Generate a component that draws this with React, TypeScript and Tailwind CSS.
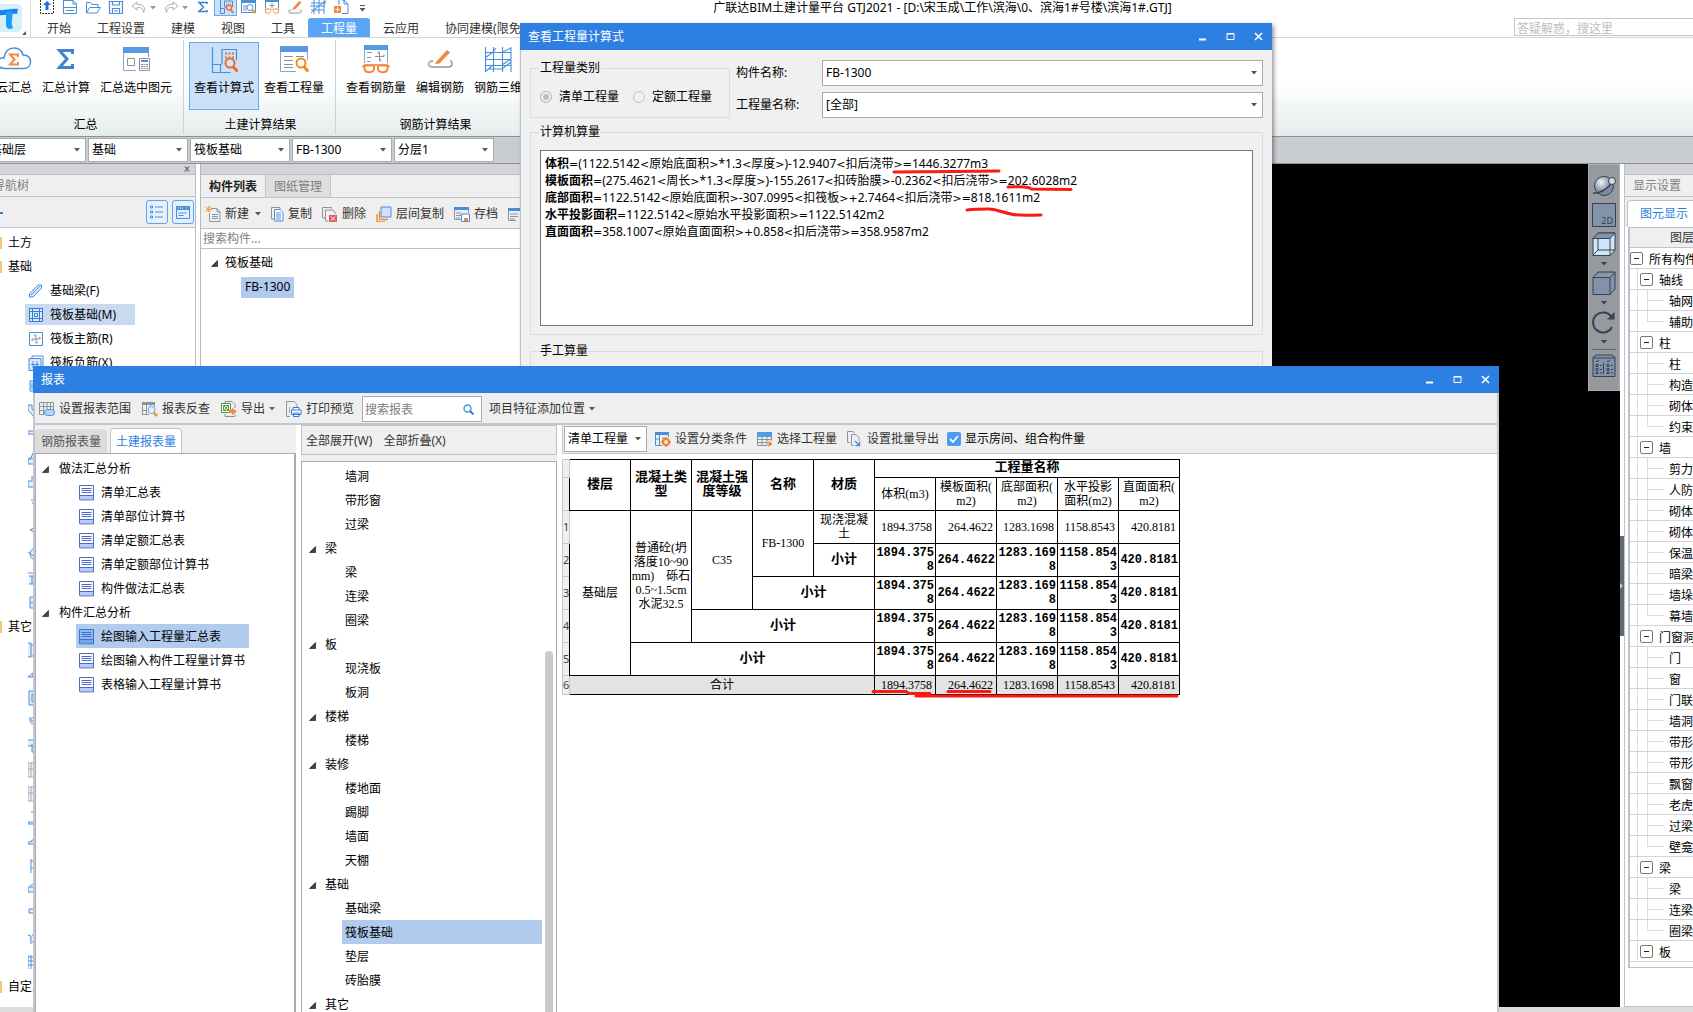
import type { ReactNode } from "react";

/* ---------- small shared pieces ---------- */

function Svg({ w = 16, h = 16, box, children }: { w?: number; h?: number; box?: string; children: ReactNode }) {
  return (
    <svg width={w} height={h} viewBox={box ?? `0 0 ${w} ${h}`} fill="none" className="shrink-0" aria-hidden="true">
      {children}
    </svg>
  );
}

function Caret({ className = "text-[#555]" }: { className?: string }) {
  return (
    <svg width="6" height="4" viewBox="0 0 6 4" className={`shrink-0 ${className}`} aria-hidden="true">
      <path d="M0 0h6L3 3.5z" fill="currentColor" />
    </svg>
  );
}

function TreeArrow() {
  return (
    <svg width="7" height="7" viewBox="0 0 7 7" className="shrink-0" aria-hidden="true">
      <path d="M6.5 0.5v6h-6z" fill="#444" stroke="#111" strokeWidth="0.6" />
    </svg>
  );
}

function Combo({ label, value, className, id }: { label: string; value: string; className: string; id?: string }) {
  return (
    <div className={`relative ${className}`}>
      <select
        id={id}
        aria-label={label}
        className="block h-full w-full appearance-none border border-[#a9abae] bg-white px-[3px] text-xs text-black outline-none"
      >
        <option>{value}</option>
      </select>
      <span className="pointer-events-none absolute inset-y-0 right-[6px] flex items-center">
        <Caret />
      </span>
    </div>
  );
}

function WindowButtons() {
  return (
    <div className="flex">
      <button aria-label="最小化" className="flex h-[27px] w-7 items-center justify-center">
        <Svg w={9} h={9}><path d="M1 7.5h7" stroke="#fff" strokeWidth="2" /></Svg>
      </button>
      <button aria-label="最大化" className="flex h-[27px] w-7 items-center justify-center">
        <Svg w={9} h={9}><path d="M1 1.5h7v6H1zM1 2h7" stroke="#fff" /></Svg>
      </button>
      <button aria-label="关闭" className="flex h-[27px] w-7 items-center justify-center">
        <Svg w={9} h={9}><path d="M1 1l7 7M8 1l-7 7" stroke="#fff" strokeWidth="1.6" /></Svg>
      </button>
    </div>
  );
}

const B = "#4a8edb";
const O = "#f08a3c";
const G = "#8b949c";

/* ---------- quick access bar ---------- */

const quick: { name: string; icon: ReactNode; caret?: boolean; active?: boolean }[] = [
  { name: "上传", icon: <Svg><path d="M1.5 0v13.500h13V0" stroke="#333" strokeDasharray="2 1" /><path d="M8 1l4 4H9.500v5h-3V5H4z" fill="#1f6fd8" /></Svg> },
  { name: "新建", icon: <Svg><path d="M1.500 0v13.500h13V4L11 .5H2M1.500 7.500h13M4 10.500h8M11 0v4h4" stroke={B} /></Svg> },
  { name: "打开", icon: <Svg><path d="M1.500 13V2.500h4l1.500 2h6v3M1.500 13l3-5.500h11L12 13z" stroke={B} /></Svg> },
  { name: "保存", icon: <Svg><path d="M1.500 1.500h13v12h-13zM4.500 1.500V5h7V1.500M4.500 13.500v-5h7v5M6 11h4" stroke={B} strokeWidth="1.200" /></Svg> },
  { name: "撤销", caret: true, icon: <Svg><path d="M6 2L1 6l5 4V7.500c4-.500 6 1 6.500 5C15.500 7 11 4 6 4.500z" stroke="#a8acb0" /></Svg> },
  { name: "重做", caret: true, icon: <Svg><path d="M10 2l5 4-5 4V7.500c-4-.500-6 1-6.500 5C.500 7 5 4 10 4.500z" stroke="#a8acb0" /></Svg> },
  { name: "汇总", icon: <Svg><path d="M12 4V2.500H4L8.500 7 4 11.500h8V10" stroke="#3b7fd0" strokeWidth="1.500" /></Svg> },
  { name: "查看计算式", active: true, icon: <Svg><path d="M2.500 0v13.500M2.500 8.500h4v5H2.500M6.500 1h8v6M6.500 1v6h3" stroke={B} /><path d="M8 3h1m1 0h1m1 0h1M8 5h1" stroke={O} /><circle cx="11" cy="7.500" r="2.500" stroke="#e8702a" strokeWidth="1.300" /><path d="M12.500 9.500l3 3.500" stroke="#e8702a" strokeWidth="1.800" /></Svg> },
  { name: "查看工程量", icon: <Svg><path d="M.500 1.500h14v11H.500z" stroke={B} /><path d="M0 0h15v3H0z" fill={B} /><path d="M2 6h4M2 8h4M2 10h4" stroke={G} /><circle cx="9" cy="7.500" r="3" fill="#fff" stroke={B} /><path d="M11.500 10l3 3" stroke="#f39a1e" strokeWidth="2.400" /></Svg> },
  { name: "查看钢筋量", icon: <Svg><path d="M1.500 8V1h13v7" stroke={B} /><path d="M1 0h14v2H1z" fill={B} /><path d="M8 3v5M5.500 5.500h5" stroke={G} /><path d="M1 9h5l2 1 2-1h5M1.500 9v3c1 2 4 2 5-1M14.500 9v3c-1 2-4 2-5-1" stroke={O} /></Svg> },
  { name: "编辑钢筋", icon: <Svg><path d="M6 8l6-7 2.500 1.500L8.500 9 5 10z" fill={O} /><path d="M4 10c-4 0-3 3 0 3h8c3 0 3-3 1-3" stroke={G} /></Svg> },
  { name: "钢筋三维", icon: <Svg><path d="M1 3h15M1 10h13M4 0v14M9 0v14M14 0v14M1 13l4-4 11-8M0 6h15" stroke={B} /></Svg> },
  { name: "导出", icon: <Svg><path d="M6 0v5M9 0h2l4 4v9.500H9M11 0v4h4" stroke={B} /><path d="M1 6h7v7H1z" fill={O} /><path d="M2.500 9.500h4M4.500 7.500v4" stroke="#fff" /></Svg> },
];

const menus = ["开始", "工程设置", "建模", "视图", "工具", "工程量", "云应用", "协同建模(限免"];

/* ---------- ribbon icons ---------- */

const icCloud = (
  <Svg w={36} h={28}>
    <path d="M9 23.500C3 23.500 1 20 2 16.500c1-3 4-4 6-3.500C9 6 13 3 18 3c5 0 8 3 9 7 5 0 7.500 3 7.500 7s-3 6.500-7 6.500z" stroke={B} strokeWidth="1.500" />
    <path d="M22 12v-2.500h-8l4.500 5-4.500 5h8V17" stroke={O} strokeWidth="2" />
  </Svg>
);
const icSigma = (
  <Svg w={28} h={28}><path d="M20.500 9V5.500H7.500L15 14l-7.500 8.500h13V19" stroke="#3f83d2" strokeWidth="3" /></Svg>
);
const icCalc = (
  <Svg w={28} h={28}>
    <path d="M1 2h26v6H1z" fill="#5598e4" />
    <path d="M1.500 8v17.500H14M26.500 8v4M5.500 13.500h7v7h-7z" stroke={G} />
    <path d="M1.500 8v17.500H14" stroke="#7fa8d8" />
    <path d="M17.500 13.500h10v12h-10z" fill="#fff" stroke={G} />
    <path d="M19 15h7v2h-7z" fill={B} />
    <path d="M19 19.500h7M19 21.500h7M19 23.500h7" stroke={G} strokeDasharray="2 .5" />
  </Svg>
);
const icFormula = (
  <Svg w={28} h={28}>
    <path d="M2.500 2v25.500h18M2.500 19.500h8v8M12 19.500V4.500h14.500V15" stroke={B} strokeWidth="1.200" />
    <path d="M15 8.500h9M15 12.500h9" stroke="#e8702a" strokeWidth="2" strokeDasharray="2 1.500" />
    <circle cx="20" cy="18" r="4.500" fill="#cfe3fa" stroke="#e8702a" strokeWidth="2" />
    <path d="M23 21.500l4.500 5" stroke="#e8702a" strokeWidth="3" />
  </Svg>
);
const icQty = (
  <Svg w={30} h={28}>
    <path d="M1 1h28v6H1z" fill="#5598e4" />
    <path d="M1.500 7v19.500H17M28.500 7v8" stroke="#7fa8d8" />
    <path d="M5 11.500h9M5 15.500h9M5 19.500h9M5 22.500h9M17 11.500h8" stroke={G} />
    <circle cx="22" cy="18" r="4.500" stroke="#f08c1c" strokeWidth="2" />
    <path d="M25 21.500l4 5" stroke="#f08c1c" strokeWidth="3" />
  </Svg>
);
const icGlasses = (
  <Svg w={30} h={30}>
    <path d="M3 1h24v5H3z" fill="#5598e4" />
    <path d="M3.500 6v13M26.500 6v13" stroke="#7fa8d8" />
    <path d="M6 8.500h5M6 13.500h4M6 17.500h3M18.500 8v9M14 12.500h9M18.500 8c-2-1-2 2 0 2M23 12.500c1-2-1-2-1 0M18.500 17c2 1 2-2 0-2" stroke={G} />
    <path d="M1 23l3-2h22l3 2" stroke={O} strokeWidth="1.500" />
    <path d="M3.500 21.500H13v3c0 5-9.500 5-9.500 0zM17 21.500h9.500v3c0 5-9.500 5-9.500 0z" stroke={O} strokeWidth="2" />
  </Svg>
);
const icPen = (
  <Svg w={28} h={28}>
    <path d="M10 17L21 5l3 2.500L13.500 18.500 9 19z" fill={O} />
    <path d="M7 16c-6 0-6 6 0 6h15c5 0 5-5 2-6.500" stroke={G} strokeWidth="1.300" />
  </Svg>
);
const icGrid = (
  <Svg w={28} h={28}>
    <path d="M1.500 2v25M9.500 2v25M18.500 2v25M27 2v25M1 7.500h26M1 14.500h26M1 20.500h26M1 27L9 20M1 13l8-6 3-4M18 20l9-6M19 7l8-4M4 24h14l9-7" stroke={B} strokeWidth="1.100" />
  </Svg>
);

function RibbonButton({ icon, text, active }: { icon: ReactNode; text: string; active?: boolean }) {
  return (
    <button
      className={`flex h-[68px] shrink-0 flex-col items-center border px-1 pt-px ${
        active ? "border-[#6aa9ea] bg-[#cbe1f9]" : "border-transparent"
      }`}
    >
      <span className="flex h-[30px] items-center">{icon}</span>
      <span className="mt-[6px] text-xs whitespace-nowrap">{text}</span>
    </button>
  );
}

function RibbonGroup({ title, className, children }: { title: string; className: string; children: ReactNode }) {
  return (
    <section className={`flex shrink-0 flex-col pt-1 ${className}`}>
      <div className="flex">{children}</div>
      <div className="mt-[7px] pr-[3px] text-center text-xs">{title}</div>
    </section>
  );
}

function Header() {
  return (
    <header className="shrink-0">
      <div className="flex h-[38px] border-b border-[#d4d6d8] bg-white">
        <div className="flex w-[31px] shrink-0 items-end border-r border-[#d9d9d9]">
          <Svg w={28} h={33}>
            <rect x="-8" y="0" width="30" height="28" rx="5" fill="#d8eefb" />
            <path d="M-4 5C2 8 10 4 18 5l-1 5c-5-1-10 2-21 1z" fill="#1a7fe8" />
            <path d="M6 8l6-1c2 5-2 10 1 17-3 2-7 1-7-3z" fill="#16a0f5" />
            <path d="M26 27v4h-4z" fill="#555" />
          </Svg>
        </div>
        <div className="flex min-w-0 flex-1 flex-col">
          <div className="flex h-[19px] pl-1">
            <div className="flex h-4 shrink-0 items-start">
              {quick.map((q) => (
                <div key={q.name} className="flex h-4 items-center">
                  <button
                    aria-label={q.name}
                    className={`flex h-4 w-[23px] items-start justify-center ${q.active ? "border border-t-0 border-[#6aa9ea] bg-[#cbe1f9]" : ""}`}
                  >
                    {q.icon}
                  </button>
                  {q.caret && <Caret className="mr-[3px] text-[#999]" />}
                </div>
              ))}
              <button aria-label="更多" className="flex h-4 w-5 items-center justify-center">
                <Svg w={7} h={7}><path d="M1 .5h5" stroke="#555" /><path d="M.500 3h6l-3 3.500z" fill="#555" /></Svg>
              </button>
            </div>
            <h1 className="flex-1 pr-[180px] text-center text-xs leading-4 whitespace-nowrap">
              广联达BIM土建计量平台 GTJ2021 - [D:\宋玉成\工作\滨海\0、滨海1#号楼\滨海1#.GTJ]
            </h1>
          </div>
          <div className="flex h-[19px] justify-between pl-[3px]">
            <nav className="flex">
              {menus.map((m) => (
                <button
                  key={m}
                  className={`px-[13px] pt-[2px] text-xs leading-[17px] whitespace-nowrap ${
                    m === "工程量" ? "rounded-t-[3px] bg-[#5aa5f5] text-white" : "text-[#333]"
                  }`}
                >
                  {m}
                </button>
              ))}
            </nav>
            <input
              aria-label="搜索"
              placeholder="答疑解惑，搜这里"
              className="h-[18px] w-[179px] border border-r-0 border-[#c6c6c6] bg-white px-[2px] pt-[2px] text-xs placeholder:text-[#bdbdbd]"
            />
          </div>
        </div>
      </div>

      {/* Ribbon */}
      <div className="flex h-[98px] overflow-hidden bg-linear-to-b from-white from-45% to-[#e6ecec]">
        <RibbonGroup title="汇总" className="-ml-[9px] w-[192px]">
          <RibbonButton icon={icCloud} text="云汇总" />
          <RibbonButton icon={icSigma} text="汇总计算" />
          <RibbonButton icon={icCalc} text="汇总选中图元" />
        </RibbonGroup>
        <div className="my-[2px] w-px bg-[#cfd2d4]" />
        <RibbonGroup title="土建计算结果" className="w-[151px] pl-[5px]">
          <RibbonButton icon={icFormula} text="查看计算式" active />
          <RibbonButton icon={icQty} text="查看工程量" />
        </RibbonGroup>
        <div className="my-[2px] w-px bg-[#cfd2d4]" />
        <RibbonGroup title="钢筋计算结果" className="w-[197px] pl-[5px]">
          <RibbonButton icon={icGlasses} text="查看钢筋量" />
          <RibbonButton icon={icPen} text="编辑钢筋" />
          <RibbonButton icon={icGrid} text="钢筋三维" />
        </RibbonGroup>
      </div>

      {/* Floor / component filters */}
      <div className="flex h-7 items-center gap-[2px] border-y border-[#8f9295] bg-[#c9ccd1]">
        <Combo label="楼层" value="基础层" className="-ml-[14px] h-6 w-[100px] shrink-0" />
        <Combo label="分类" value="基础" className="h-6 w-[100px] shrink-0" />
        <Combo label="构件类型" value="筏板基础" className="h-6 w-[100px] shrink-0" />
        <Combo label="构件" value="FB-1300" className="h-6 w-[100px] shrink-0" />
        <Combo label="分层" value="分层1" className="h-6 w-[100px] shrink-0" />
      </div>
    </header>
  );
}

/* ---------- navigation tree ---------- */

const navIcons: Record<string, ReactNode> = {
  beam: <Svg><path d="M1.500 10.500L10 2h3.500v3L5 14H1.500z" fill="#d9e8f9" stroke={B} /><path d="M3 12l8.500-8.500" stroke={B} /></Svg>,
  raft: <Svg><path d="M1.500 1.500h13v13h-13z" fill="#dbe8fa" stroke="#2f7cd4" /><path d="M4.500 1.500v13M11.500 1.500v13M1.500 4.500h13M1.500 11.500h13" stroke="#2f7cd4" /><path d="M6.500 6.500h3v3h-3z" fill="#fff" stroke="#2f7cd4" /></Svg>,
  main: <Svg><path d="M1.500 1.500h13v13h-13z" stroke={B} /><path d="M8 4v8M4 8h8M8 4c-1.500-1-2 1-1 1.500M12 8c1-1.500-.500-2-1.500-1M8 12c1.500 1 2-1 1-1.500M4 8c-1 1.500.500 2 1.500 1" stroke={G} /></Svg>,
  neg: <Svg><path d="M4 3V1h11v11h-2" stroke={B} /><path d="M1 3.500h12v12H1z" fill="#dbe9fa" stroke={B} /><path d="M5 6v7M9 6v7M3 9.500h8" stroke={B} /></Svg>,
};

// Items lower down sit mostly behind the report window, so only icons are listed
const foundationRest = [
  "M2 3h12v10H2zM4 5v6",
  "M0 3h4v4l3 5-2 2-5-6z",
  "M0 5h14v3H0z",
  "M2 10l3-7M1 8h13v6H0v-3z",
  "M4 2v5H0v6h14",
  "M3 2h6M4 5h6v6",
  "M2 8l4-2v4z",
  "M8 2a6 6 0 100 12M0 6l8 6",
  "M0 3h14M1 6h13v8H1M4 6v8",
  "M2 3h12v11H2zM2 9h12",
];
const otherRest: [string, string][] = [
  ["M0 1h3v14H0M3 3h11v11H3", B],
  ["M0 11l5-4v4z", B],
  ["M1 1h13v14H1zM4 4h8v8H4z", B],
  ["M1 4h6M2 5c0 5 2 6 6 4M2 5l5 4", B],
  ["M0 2h10v6H0M4 6v8h8", B],
  ["M0 1h14v14H0zM3 1v14M0 7h6", "#a9adb1"],
  ["M0 1h14v14H0zM3 1v14M0 7h6", "#a9adb1"],
  ["M4 1v2M0 12h14v2H0z", B],
  ["M0 8h3l1-2h6v4H0z", B],
  ["M3 1v14M3 3h8M3 10h8", B],
  ["M2 4l3-2M0 5h14v5H0z", B],
  ["M1 3h10v4H1z", B],
  ["M0 5l3 1v8M4 5h6v7H4", B],
  ["M0 1v14M0 3h14M0 7h14M0 11h14M3 1v14", B],
];

function NavRow({ text, icon }: { text: string; icon: ReactNode }) {
  const selected = text === "筏板基础(M)";
  return (
    <li className="flex h-6 items-center pl-[25px]">
      <button className={`flex h-[21px] items-center gap-[6px] pt-[2px] pr-[19px] pl-[3px] text-xs ${selected ? "bg-[#c9d9f0]" : ""}`}>
        {icon}
        {text}
      </button>
    </li>
  );
}

function NavFolder({ text }: { text: string }) {
  return (
    <li className="flex h-6 items-center gap-[6px] pt-[2px] text-xs">
      <span className="h-3 w-[2px] bg-[#f0c878]" />
      {text}
    </li>
  );
}

function NavIconRow({ d, color = B }: { d: string; color?: string }) {
  return (
    <li className="flex h-6 items-center pl-[28px]">
      <Svg><path d={d} stroke={color} fill="#e3eefb" /></Svg>
    </li>
  );
}

function NavPanel() {
  return (
    <aside className="flex w-[196px] shrink-0 flex-col overflow-hidden border-r border-[#b9bdc3] bg-white">
      <div className="flex h-[11px] shrink-0 items-center justify-end border-b border-[#bcbfc6] bg-[#d2d4d9] pr-[5px]">
        <Svg w={6} h={6}><path d="M0 .5h2l1 1.500 1-1.500h2L4 3l2 2.500H4L3 4 2 5.500H0L2 3z" fill="#777" /></Svg>
      </div>
      <div className="h-[22px] shrink-0 border-b border-[#bfc2c8] bg-[#efefef] text-xs leading-[22px] text-[#808080]">
        <span className="-ml-[7px]">导航树</span>
      </div>
      <div className="flex h-[31px] shrink-0 items-center justify-end gap-1 border-b border-[#bfc2c8] bg-[#efefef] pr-px">
        <Svg w={3} h={7}><path d="M0 3h3v2H0zM-1 1h1v5h-1z" fill="#2f7cd4" /></Svg>
        <span className="flex-1" />
        <button aria-label="列表" className="flex h-6 w-[22px] items-center justify-center rounded-[3px] border border-[#5aa5f5] bg-[#e4f0fd]">
          <Svg w={14} h={16}><path d="M.500 2h2v2h-2zM.500 7h2v2h-2zM.500 12h2v2h-2zM5 3h8M5 8h8M5 13h8" stroke={B} /></Svg>
        </button>
        <button aria-label="卡片" className="flex h-6 w-[22px] items-center justify-center rounded-[3px] border border-[#5aa5f5] bg-[#e4f0fd]">
          <Svg w={16} h={16}><path d="M1 2h14v4H1z" fill={B} /><path d="M1.500 2v12.500h13V2M3.500 9h8M3.500 11.500h5" stroke={B} /><path d="M3 4h6M11 4h2" stroke="#fff" strokeDasharray="1 1" /></Svg>
        </button>
      </div>
      <ul className="min-h-0 flex-1 overflow-hidden pt-[2px]">
        <NavFolder text="土方" />
        <NavFolder text="基础" />
        <NavRow text="基础梁(F)" icon={navIcons.beam} />
        <NavRow text="筏板基础(M)" icon={navIcons.raft} />
        <NavRow text="筏板主筋(R)" icon={navIcons.main} />
        <NavRow text="筏板负筋(X)" icon={navIcons.neg} />
        {foundationRest.map((d) => (
          <NavIconRow key={d} d={d} />
        ))}
        <NavFolder text="其它" />
        {otherRest.map(([d, c], i) => (
          <NavIconRow key={i} d={d} color={c} />
        ))}
        <NavFolder text="自定义" />
      </ul>
    </aside>
  );
}

/* ---------- component list ---------- */

const listTools: { text: string; icon: ReactNode; caret?: boolean }[] = [
  { text: "新建", caret: true, icon: <Svg w={15}><path d="M5 2.500h6l3 3.500v9.500H3.500V7M11 2.500V6h3M6 8.500h6M6 10.500h6M6 12.500h6" stroke={G} /><path d="M0 1l5 5M5 0L0 6M2.500 0v6M0 3.500h6" stroke="#f2a33a" /></Svg> },
  { text: "复制", icon: <Svg w={13}><path d="M3 13H.500V1.500H9v2" stroke={G} /><path d="M3.500 3.500H9l3 3v8.500H3.500z" fill="#fff" stroke={B} /><path d="M5 7h5M5 9h5M5 11h5M5 13h5" stroke={B} /></Svg> },
  { text: "删除", icon: <Svg><path d="M3 12H.500V1.500h9v1M3.500 15V4H11l2 2v2M3.500 15H6" stroke={G} /><path d="M7 9h8v7H7z" fill="#dd5b63" /><path d="M9 10.500l4 4M13 10.500l-4 4" stroke="#fff" /></Svg> },
  { text: "层间复制", icon: <Svg><path d="M5 1h10v10H5z" fill="#cfe2fa" stroke={B} /><path d="M3.500 5v8.500H12M1 8v8h8" stroke={O} strokeWidth="1.400" /></Svg> },
  { text: "存档", icon: <Svg><path d="M0 1h15v3H0z" fill={B} /><path d="M.500 4v9.500H7M2 7h5M2 9.500h5M2 12h4M14.500 4v3" stroke={G} /><path d="M7.500 8h8v7.500h-8z" fill="#fff" stroke={B} /><path d="M10 12h4v3h-4z" fill={O} /></Svg> },
];

function ComponentPanel() {
  return (
    <section className="flex w-[340px] shrink-0 flex-col border-l border-[#b4b7bc] bg-white">
      <div className="h-[11px] shrink-0 border-b border-[#bcbfc6] bg-[#d2d4d9]" />
      <div className="flex h-[23px] shrink-0 border-b border-[#bfc2c8] bg-[#efefef] text-xs">
        <button className="w-[65px] border-r border-[#c1c4ca] pt-px font-semibold text-[#222]">构件列表</button>
        <button className="w-[65px] border-r border-[#c1c4ca] bg-[#dedede] pt-px text-[#808080]">图纸管理</button>
      </div>
      <div className="flex h-[31px] shrink-0 items-center gap-[10px] overflow-hidden border-b border-[#bfc2c8] bg-[#efefef] pt-px pl-[5px]">
        {listTools.map((t) => (
          <button key={t.text} className="flex shrink-0 items-center gap-[4px] text-xs text-[#333]">
            {t.icon}
            {t.text}
            {t.caret && <Caret className="ml-[2px] text-[#555]" />}
          </button>
        ))}
        <Svg><path d="M0 2h15v3H0z" fill={B} /><path d="M.500 5v9.500H8M2 8h8M2 10.500h8M2 13h5" stroke={G} /></Svg>
      </div>
      <input
        aria-label="搜索构件"
        placeholder="搜索构件..."
        className="h-[20px] shrink-0 border-b border-[#bfc2c8] bg-white pl-[2px] text-xs placeholder:text-[#808080]"
      />
      <ul className="pt-[2px] text-xs">
        <li className="flex h-6 items-center gap-[7px] pl-[10px]">
          <TreeArrow />
          筏板基础
        </li>
        <li className="flex h-6 items-center pl-10">
          <button className="h-[21px] bg-[#b0cbed] px-1">FB-1300</button>
        </li>
      </ul>
    </section>
  );
}

/* ---------- 3D canvas tools ---------- */

const D = "#37424f";

function ViewTools() {
  return (
    <div className="flex h-[227px] w-8 flex-col items-center border border-[#a9acb0] bg-[#96999e] pt-[10px]">
      <button aria-label="动态观察" className="flex h-7 items-start">
        <Svg w={26} h={22}>
          <defs>
            <radialGradient id="ball" cx="35%" cy="30%"><stop offset="0" stopColor="#eef3f8" /><stop offset="1" stopColor="#7a8ca6" /></radialGradient>
          </defs>
          <circle cx="13" cy="11" r="9.500" fill="url(#ball)" stroke={D} />
          <path d="M2 18c6 1 16-4 20-13" stroke={D} strokeWidth="1.500" />
          <circle cx="21" cy="6" r="3.500" fill="#d3dbe6" stroke={D} />
        </Svg>
      </button>
      <button aria-label="2D" className="flex h-6 w-6 items-end justify-end border border-[#37424f] bg-[#8292ab] pr-[2px] text-[9px] leading-[11px] text-[#37424f]">
        2D
      </button>
      <button aria-label="线框" className="mt-[5px] flex">
        <Svg w={24} h={24}>
          <path d="M1 6.500L6 1h17v17l-5 5.500H1z" fill="#cfe6fb" stroke={D} /><path d="M1 6.500L6 1h17l-5 5.500z" fill="#8292ab" stroke={D} /><path d="M18 6.500v17M6 6.500V18h17M6 18l-5 5" stroke={D} />
        </Svg>
      </button>
      <Caret className="mt-[6px] text-[#37424f]" />
      <button aria-label="实体" className="mt-[5px] flex">
        <Svg w={24} h={24}>
          <path d="M1 6.500L6 1h17v17l-5 5.500H1zM1 6.500h17l5-5.500M18 6.500v17" fill="#8292ab" stroke={D} />
        </Svg>
      </button>
      <Caret className="mt-[6px] text-[#37424f]" />
      <button aria-label="旋转" className="mt-[5px] flex">
        <Svg w={24} h={24}>
          <path d="M20 17a10 10 0 11-.500-10" stroke={D} strokeWidth="2" /><path d="M22.500 2v7.500H15z" fill={D} />
        </Svg>
      </button>
      <Caret className="mt-[6px] text-[#37424f]" />
      <div className="mt-[5px] h-px w-6 shrink-0 bg-[#5d646c]" />
      <button aria-label="显示设置" className="mt-[4px] flex">
        <Svg w={24} h={24}>
          <path d="M1 3.500L4 1h16l3 2.500v19H1zM1 4h22" fill="#8292ab" stroke={D} />
          <path d="M4 7l1 1 2-2M15 7l1 1 2-2M11.500 9v11" stroke={D} />
          <path d="M4 10.500h2v2H4zM4 14.500h2v2H4zM4 18.500h2v1H4zM15 10.500h2v2h-2zM15 14.500h2v2h-2zM15 18.500h2v1h-2zM8 11.500h2M8 15.500h2M8 19h2M19 11.500h2M19 15.500h2M19 19h2" stroke={D} />
        </Svg>
      </button>
    </div>
  );
}

/* ---------- layer panel on the right ---------- */

const layers: [number, string][] = [
  [0, "所有构件"],
  [1, "轴线"], [2, "轴网"], [2, "辅助"],
  [1, "柱"], [2, "柱"], [2, "构造"], [2, "砌体"], [2, "约束"],
  [1, "墙"], [2, "剪力"], [2, "人防"], [2, "砌体"], [2, "砌体"], [2, "保温"], [2, "暗梁"], [2, "墙垛"], [2, "幕墙"],
  [1, "门窗洞"], [2, "门"], [2, "窗"], [2, "门联"], [2, "墙洞"], [2, "带形"], [2, "带形"], [2, "飘窗"], [2, "老虎"], [2, "过梁"], [2, "壁龛"],
  [1, "梁"], [2, "梁"], [2, "连梁"], [2, "圈梁"],
  [1, "板"],
];

function LayerRow({ level, text, last }: { level: number; text: string; last: boolean }) {
  return (
    <li className="flex h-[21px] items-center border-b border-[#d2d4d6] whitespace-nowrap">
      {level > 0 && <span className="h-full w-2 shrink-0 border-r border-[#dcdcdc]" />}
      {level === 2 && (
        <>
          <span className={`w-[10px] shrink-0 border-r border-[#dcdcdc] ${last ? "h-[11px] self-start" : "h-full"}`} />
          <span className="mr-[5px] h-px w-4 shrink-0 bg-[#dcdcdc]" />
        </>
      )}
      {level < 2 && (
        <button
          aria-label="折叠"
          className={`mr-[6px] flex size-[13px] shrink-0 items-center justify-center rounded-[2px] border border-[#777] bg-white ${level === 0 ? "" : "ml-[2px]"}`}
        >
          <span className="h-px w-[5px] bg-[#222]" />
        </button>
      )}
      <span className="pt-[3px]">{text}</span>
    </li>
  );
}

function LayerPanel() {
  return (
    <aside className="flex w-[69px] shrink-0 flex-col overflow-hidden border-b border-l border-[#bfc2c8] bg-white text-xs">
      <div className="h-[11px] shrink-0 border-b border-[#bcbfc6] bg-[#d2d4d9]" />
      <div className="h-[22px] shrink-0 border-b border-[#bfc2c8] bg-[#efefef] pl-2 leading-[21px] text-[#808080]">显示设置</div>
      <div className="flex h-[30px] shrink-0 items-end bg-[#efefef] pl-[2px]">
        <button className="h-[27px] w-[67px] shrink-0 rounded-tl-[4px] border-t border-l border-[#bfc2c8] bg-white pl-2 text-left text-[#2d7fe0]">
          <span className="ml-[4px] whitespace-nowrap">图元显示</span>
        </button>
      </div>
      <div className="ml-[3px] flex flex-col border-b border-l-2 border-[#bfc2c8]">
        <div className="h-[21px] border-y border-[#bfc2c8] bg-[#efefef] pl-[40px] leading-[20px] whitespace-nowrap text-[#333]">图层</div>
        <ul>
          {layers.map(([level, text], i) => (
            <LayerRow key={i} level={level} text={text} last={layers[i + 1]?.[0] === 1} />
          ))}
          <li className="h-[5px]" />
        </ul>
      </div>
    </aside>
  );
}

/* ---------- formula dialog ---------- */

const formulas: [string, string][] = [
  ["体积", "=(1122.5142<原始底面积>*1.3<厚度>)-12.9407<扣后浇带>=1446.3277m3"],
  ["模板面积", "=(275.4621<周长>*1.3<厚度>)-155.2617<扣砖胎膜>-0.2362<扣后浇带>=202.6028m2"],
  ["底部面积", "=1122.5142<原始底面积>-307.0995<扣筏板>+2.7464<扣后浇带>=818.1611m2"],
  ["水平投影面积", "=1122.5142<原始水平投影面积>=1122.5142m2"],
  ["直面面积", "=358.1007<原始直面面积>+0.858<扣后浇带>=358.9587m2"],
];

// Operators use a wider face than the digits
function Formula({ text }: { text: string }) {
  return (
    <>
      {text.split(/([<>=+]+)/).map((part, i) =>
        i % 2 ? <span key={i} className="font-['DejaVu_Sans',sans-serif] text-[11px]">{part}</span> : part,
      )}
    </>
  );
}

function FormulaDialog() {
  return (
    <div
      role="dialog"
      aria-label="查看工程量计算式"
      className="absolute top-[23px] left-[520px] h-[600px] w-[752px] bg-[#f0f0f0] text-xs shadow-[2px_2px_4px_rgba(0,0,0,0.4)]"
    >
      <div className="flex h-[27px] items-center justify-between bg-[#2d7fe2] pl-2 text-white">
        <span>查看工程量计算式</span>
        <WindowButtons />
      </div>
      <div className="border-l border-[#b9c3d4] px-[9px] pt-[10px]">
        <div className="flex">
          <fieldset className="h-[58px] w-[200px] border border-[#dcdcdc] px-2">
            <legend className="px-px leading-4">工程量类别</legend>
            <div className="flex items-center gap-[14px] pt-[13px] pl-px leading-4">
              <label className="flex items-center gap-[7px]">
                <input type="radio" name="kind" defaultChecked disabled className="size-3 appearance-none rounded-full border border-[#bcbcbc] bg-[#bcbcbc] shadow-[inset_0_0_0_2px_#f0f0f0]" />
                清单工程量
              </label>
              <label className="flex items-center gap-[7px]">
                <input type="radio" name="kind" disabled className="size-3 appearance-none rounded-full border border-[#c4c4c4]" />
                定额工程量
              </label>
            </div>
          </fieldset>
          <div className="ml-[6px] grid flex-1 grid-cols-[86px_1fr] items-center gap-y-[6px]">
            <label htmlFor="member">构件名称:</label>
            <Combo id="member" label="构件名称" value="FB-1300" className="h-[26px]" />
            <label htmlFor="quantity">工程量名称:</label>
            <Combo id="quantity" label="工程量名称" value="[全部]" className="h-[26px]" />
          </div>
        </div>
        <fieldset className="mt-[6px] border border-[#dcdcdc] px-[9px] pb-2">
          <legend className="leading-4">计算机算量</legend>
          <div className="relative mt-[10px] h-[176px] border border-[#777] bg-white pt-1 pl-1 leading-[17px] text-black">
            {formulas.map(([name, text]) => (
              <p key={name} className="h-[17px] whitespace-nowrap">
                <b>{name}</b>
                <Formula text={text} />
              </p>
            ))}
            <svg width="520" height="80" viewBox="541 151 520 80" fill="none" className="pointer-events-none absolute top-0 left-0 overflow-visible" aria-hidden="true">
              <path d="M894 172l60-.5 45-.5M1008 187c10 0 14-1 22 1M1031 189l40 .5M967 210c8-1 16-1 22-1s12 3 22 5c6 2 18 1 30 1" stroke="#fb1a12" strokeWidth="3" strokeLinecap="round" />
            </svg>
          </div>
        </fieldset>
        <fieldset className="mt-2 h-[120px] border border-[#dcdcdc] px-[9px]">
          <legend className="leading-4">手工算量</legend>
        </fieldset>
      </div>
    </div>
  );
}

/* ---------- report window ---------- */

const reportTools: { text: string; icon: ReactNode; caret?: boolean }[] = [
  { text: "设置报表范围", icon: <Svg><path d="M.500 1.500h14V9M.500 1.500v12H5M.500 5.500h14M.500 9.500H5M4.500 1.500v12M8 1.500V8M11.500 1.500V8" stroke={G} /><rect x="5.500" y="8.500" width="10" height="6" rx="3" fill="#b9d3f4" stroke={B} /></Svg> },
  { text: "报表反查", icon: <Svg><path d="M.500 1.500h12V6M.500 1.500v12H7M.500 9.500H5M4.500 1.500v12M8.500 1.500V5" stroke={G} /><path d="M0 1h13v3H0z" fill={G} /><circle cx="9.500" cy="9" r="3.500" fill="#e4effc" stroke="#6fa6e8" /><path d="M12 12l3 3" stroke="#f39a1e" strokeWidth="2.500" /></Svg> },
  { text: "导出", caret: true, icon: <Svg><path d="M4 2V.5h7l3 3V7M4 13v2.500h10V13" stroke={G} /><path d="M.500 2.500h9v9h-9z" fill="#fff" stroke="#4e9a3a" /><path d="M2.500 4.500h5v5h-5z" fill="#fff" stroke="#4e9a3a" /><path d="M3 5l4 4M7 5L3 9" stroke="#4e9a3a" /><path d="M11 8.500V7l5 3.500-5 3.500v-2H8V8.500z" fill={O} /></Svg> },
  { text: "打印预览", icon: <Svg><path d="M.500 15.500V.5H8l3 3V6M.500 15.500H4" stroke={G} /><path d="M3 7h1M3 9h1M3 11h1" stroke={G} strokeWidth="1.500" /><path d="M7 9V6.500h6V9M5.500 9h9.500v4.500H5.500zM7.500 12h5.500v3.500H7.500z" fill="#fff" stroke="#2f7cd4" /></Svg> },
];

const reportTree = [
  { title: "做法汇总分析", items: ["清单汇总表", "清单部位计算书", "清单定额汇总表", "清单定额部位计算书", "构件做法汇总表"] },
  { title: "构件汇总分析", items: ["绘图输入工程量汇总表", "绘图输入构件工程量计算书", "表格输入工程量计算书"] },
];

const memberTree: { title?: string; items: string[] }[] = [
  { items: ["墙洞", "带形窗", "过梁"] },
  { title: "梁", items: ["梁", "连梁", "圈梁"] },
  { title: "板", items: ["现浇板", "板洞"] },
  { title: "楼梯", items: ["楼梯"] },
  { title: "装修", items: ["楼地面", "踢脚", "墙面", "天棚"] },
  { title: "基础", items: ["基础梁", "筏板基础", "垫层", "砖胎膜"] },
  { title: "其它", items: [] },
];

const tableTools: { text: string; icon: ReactNode }[] = [
  { text: "设置分类条件", icon: <Svg><path d="M.500 1.500h13V6M.500 1.500v13H7M4.500 1.500v13M.500 8h4M7 7h3M7 10h1" stroke={B} /><path d="M0 1h14v3H0z" fill={B} /><circle cx="11" cy="11" r="3" stroke="#f08030" strokeWidth="2.200" /><path d="M11 6v2M11 14v2M6 11h2M14 11h2" stroke="#f08030" strokeWidth="1.600" /></Svg> },
  { text: "选择工程量", icon: <Svg><path d="M0 1h15v5H0z" fill="#5598e4" /><path d="M.500 6v8.500H10M.500 8.500h14M.500 11.500H10M5 6v8.500M10 6v8.500M14.500 6v4" stroke={G} /><path d="M11.500 9.500l4 3.500-4 3z" fill="#f08030" /></Svg> },
  { text: "设置批量导出", icon: <Svg><path d="M3 11.500H.500V.5H6l1.500 1.500M4.500 14.500v-11H9l3 3v3M4.500 14.500H7" stroke={G} /><path d="M8 10l4 4M12.500 10.500v4h-4" stroke={B} strokeWidth="1.400" /></Svg> },
];

const values = ["1894.3758", "264.4622", "1283.1698", "1158.8543", "420.8181"];

function Nums({ bold }: { bold?: boolean }) {
  return (
    <>
      {values.map((v) => (
        <td
          key={v}
          className={`border border-black text-right ${
            bold ? "px-px pb-px font-['Liberation_Mono',monospace] font-bold break-all" : "py-0 pr-[3px] pb-px pl-0"
          }`}
        >
          {v}
        </td>
      ))}
    </>
  );
}

function RowNo({ n }: { n?: number }) {
  return (
    <th scope="row" className="border border-[#c4c4c4] bg-[#efefef] p-0 text-left font-['Noto_Sans',sans-serif] text-[11px] font-normal text-[#444]">
      {n}
    </th>
  );
}

const cell = "border border-black p-0 pb-px whitespace-pre";
const strong = "border border-black p-0 pb-[3px] text-[13px] font-bold whitespace-pre";

function ReportTable() {
  return (
    <table className="w-[617px] table-fixed border-collapse text-center font-['Liberation_Serif','Noto_Sans_CJK_SC',serif] text-xs leading-[14px] text-black">
      <colgroup>
        <col className="w-[7px]" />
        {Array.from({ length: 10 }, (_, i) => (
          <col key={i} className="w-[61px]" />
        ))}
      </colgroup>
      <thead>
        <tr className="h-[18px]">
          <RowNo />
          <th rowSpan={2} className={strong}>楼层</th>
          <th rowSpan={2} className={strong}>{"混凝土类\n型"}</th>
          <th rowSpan={2} className={strong}>{"混凝土强\n度等级"}</th>
          <th rowSpan={2} className={strong}>名称</th>
          <th rowSpan={2} className={strong}>材质</th>
          <th colSpan={5} className={strong}>工程量名称</th>
        </tr>
        <tr className="h-[33px]">
          <RowNo />
          {["体积(m3)", "模板面积(\nm2)", "底部面积(\nm2)", "水平投影\n面积(m2)", "直面面积(\nm2)"].map((h) => (
            <th key={h} className={`${cell} font-normal`}>{h}</th>
          ))}
        </tr>
      </thead>
      <tbody>
        <tr className="h-[33px]">
          <RowNo n={1} />
          <td rowSpan={5} className={cell}>基础层</td>
          <td rowSpan={4} className={cell}>{"普通砼(坍\n落度10~90\nmm)　砾石\n0.5~1.5cm\n水泥32.5"}</td>
          <td rowSpan={3} className={cell}>C35</td>
          <td rowSpan={2} className={cell}>FB-1300</td>
          <td className={cell}>{"现浇混凝\n土"}</td>
          <Nums />
        </tr>
        <tr className="h-[33px]">
          <RowNo n={2} />
          <td className={strong}>小计</td>
          <Nums bold />
        </tr>
        <tr className="h-[33px]">
          <RowNo n={3} />
          <td colSpan={2} className={strong}>小计</td>
          <Nums bold />
        </tr>
        <tr className="h-[33px]">
          <RowNo n={4} />
          <td colSpan={3} className={strong}>小计</td>
          <Nums bold />
        </tr>
        <tr className="h-[33px]">
          <RowNo n={5} />
          <td colSpan={4} className={strong}>小计</td>
          <Nums bold />
        </tr>
        <tr className="h-[19px] bg-[#e3e3e3]">
          <RowNo n={6} />
          <td colSpan={5} className={cell}>合计</td>
          <Nums />
        </tr>
      </tbody>
    </table>
  );
}

function ReportIcon({ active }: { active?: boolean }) {
  return (
    <Svg>
      <path d="M1 1.500h14v14H1z" fill="#8d93a5" />
      <path d="M.500.500h14v14H.500z" fill={active ? "#86bdf5" : "#fff"} stroke="#4a6cc8" />
      <path d="M1 10.500h13v4H1z" fill={active ? "#6aa8f0" : "#b9cbfa"} />
      <path d="M2.500 3.500h10M2.500 5.500h10M2.500 7.500h10M1 10.500h13" stroke="#4a6cc8" />
    </Svg>
  );
}

function ReportWindow() {
  return (
    <div role="dialog" aria-label="报表" className="absolute top-[366px] right-[194px] bottom-0 left-[33px] flex flex-col overflow-hidden bg-white text-xs">
      <div className="flex h-[27px] shrink-0 items-center justify-between bg-[#2d7fe2] pl-2 text-white">
        <span>报表</span>
        <WindowButtons />
      </div>
      <div className="flex min-h-0 flex-1 flex-col border-x-2 border-[#c1c6cf]">
        <div className="flex h-8 shrink-0 items-center gap-[11px] border-b-2 border-[#c1c6cf] bg-[#efefef] pt-[2px] pl-1 text-[#333]">
          {reportTools.map((t) => (
            <button key={t.text} className="flex items-center gap-1 whitespace-nowrap">
              {t.icon}
              {t.text}
              {t.caret && <Caret className="text-[#666]" />}
            </button>
          ))}
          <div className="relative -ml-[3px]">
            <input aria-label="搜索报表" placeholder="搜索报表" className="block h-[26px] w-[120px] border border-[#a9abae] bg-white pl-[2px] placeholder:text-[#808080]" />
            <span className="absolute inset-y-0 right-2 flex items-center">
              <Svg w={11} h={11}><circle cx="4.500" cy="4.500" r="3.500" stroke="#4aa0d8" strokeWidth="1.500" /><path d="M7 7l3.500 3.500" stroke="#2b6fc0" strokeWidth="1.800" /></Svg>
            </span>
          </div>
          <button className="-ml-1 flex items-center gap-1 whitespace-nowrap">
            项目特征添加位置
            <Caret />
          </button>
        </div>

        <div className="flex min-h-0 flex-1 gap-[5px]">
          {/* Report list */}
          <div className="flex w-[261px] shrink-0 flex-col">
            <div className="flex h-[28px] shrink-0 items-end gap-[3px] bg-[#efefef]">
              <button className="h-6 rounded-t-[4px] bg-[#dcdcdc] px-[6px] pt-[2px] whitespace-nowrap text-[#555]">钢筋报表量</button>
              <button className="h-[25px] w-[72px] rounded-t-[4px] border border-b-0 border-[#bfc2c8] bg-white pt-px text-[#2d7fe0]">土建报表量</button>
            </div>
            <div className="flex-1 border border-r-2 border-b-0 border-[#a9abae] pt-[2px]">
              {reportTree.map((g) => (
                <ul key={g.title}>
                  <li className="flex h-6 items-center gap-[10px] pt-[2px] pl-[6px]">
                    <TreeArrow />
                    {g.title}
                  </li>
                  {g.items.map((t) => {
                    const active = t === "绘图输入工程量汇总表";
                    return (
                      <li key={t} className="pl-10">
                        <button className={`flex h-6 items-center gap-[6px] pt-[2px] pl-[3px] whitespace-nowrap ${active ? "w-[173px] bg-[#b0cbed]" : ""}`}>
                          <ReportIcon active={active} />
                          {t}
                        </button>
                      </li>
                    );
                  })}
                </ul>
              ))}
            </div>
          </div>

          {/* Member list */}
          <div className="flex w-[256px] shrink-0 flex-col overflow-hidden bg-[#efefef]">
            <div className="flex h-[30px] shrink-0 items-center gap-[11px] border border-[#bfc2c8] pt-[2px] pl-1 text-[#333]">
              <button>全部展开(W)</button>
              <button>全部折叠(X)</button>
            </div>
            <div className="mt-[6px] flex min-h-0 flex-1 overflow-hidden border border-b-0 border-[#a9abae] bg-white">
              <div className="min-w-0 flex-1 pt-[2px]">
                {memberTree.map((g, i) => (
                  <ul key={i}>
                    {g.title && (
                      <li className="flex h-6 items-center gap-[9px] pt-[2px] pl-[7px]">
                        <TreeArrow />
                        {g.title}
                      </li>
                    )}
                    {g.items.map((t) => (
                      <li key={t} className="pl-10">
                        <button className={`flex h-6 w-[200px] items-center pt-[2px] pl-[3px] ${t === "筏板基础" ? "bg-[#b0cbed]" : ""}`}>{t}</button>
                      </li>
                    ))}
                  </ul>
                ))}
              </div>
              <div className="flex w-[11px] flex-col pt-[189px]">
                <div className="w-2 flex-1 rounded-t-full bg-[#cbcbcb]" />
              </div>
            </div>
          </div>

          {/* Table area */}
          <div className="flex min-w-0 flex-1 flex-col">
            <div className="flex h-[29px] shrink-0 items-center gap-[8px] border-b border-l border-[#c1c6cf] bg-[#efefef] pl-px text-[#333]">
              <Combo label="工程量类型" value="清单工程量" className="h-[26px] w-[83px]" />
              <div className="flex items-center gap-[10px]">
                {tableTools.map((t) => (
                  <button key={t.text} className="flex items-center gap-1 whitespace-nowrap">
                    {t.icon}
                    {t.text}
                  </button>
                ))}
              </div>
              <label className="flex items-center gap-1 text-black">
                <span className="relative flex size-[14px]">
                  <input type="checkbox" defaultChecked className="peer size-[14px] appearance-none rounded-[2px] bg-[#4b9bf0]" />
                  <svg width="14" height="14" viewBox="0 0 14 14" fill="none" className="pointer-events-none absolute inset-0 hidden peer-checked:block" aria-hidden="true">
                    <path d="M3 7l3 3 5-6" stroke="#fff" strokeWidth="1.800" />
                  </svg>
                </span>
                显示房间、组合构件量
              </label>
            </div>
            <div className="relative mt-[5px]">
              <ReportTable />
              <svg width="620" height="240" viewBox="562 459 620 240" fill="none" className="pointer-events-none absolute top-0 left-0" aria-hidden="true">
                <path d="M873 691.500h33l3 2h21M948 691.500h42M916 696h261" stroke="#fb1a12" strokeWidth="3" strokeLinecap="round" />
              </svg>
            </div>
          </div>
        </div>
      </div>
    </div>
  );
}

export default function App() {
  return (
    <div className="relative flex h-screen flex-col overflow-hidden bg-white font-['Noto_Sans','Noto_Sans_CJK_SC',sans-serif] text-black">
      <Header />
      <main className="flex min-h-0 flex-1">
        <NavPanel />
        <div className="w-1 shrink-0 bg-white" />
        <ComponentPanel />
        <div className="flex min-w-0 flex-1 items-start justify-end bg-black">
          <ViewTools />
        </div>
        <div className="flex w-1 shrink-0 flex-col pt-[372px]">
          <button aria-label="收起面板" className="flex h-[100px] items-center bg-[#5f6974]">
            <Svg w={4} h={6}><path d="M0 0l3 3-3 3z" fill="#c9ccd1" /></Svg>
          </button>
        </div>
        <LayerPanel />
      </main>
      <footer className="h-[5px] shrink-0 bg-[#dcdcdf]" />
      <FormulaDialog />
      <ReportWindow />
    </div>
  );
}
